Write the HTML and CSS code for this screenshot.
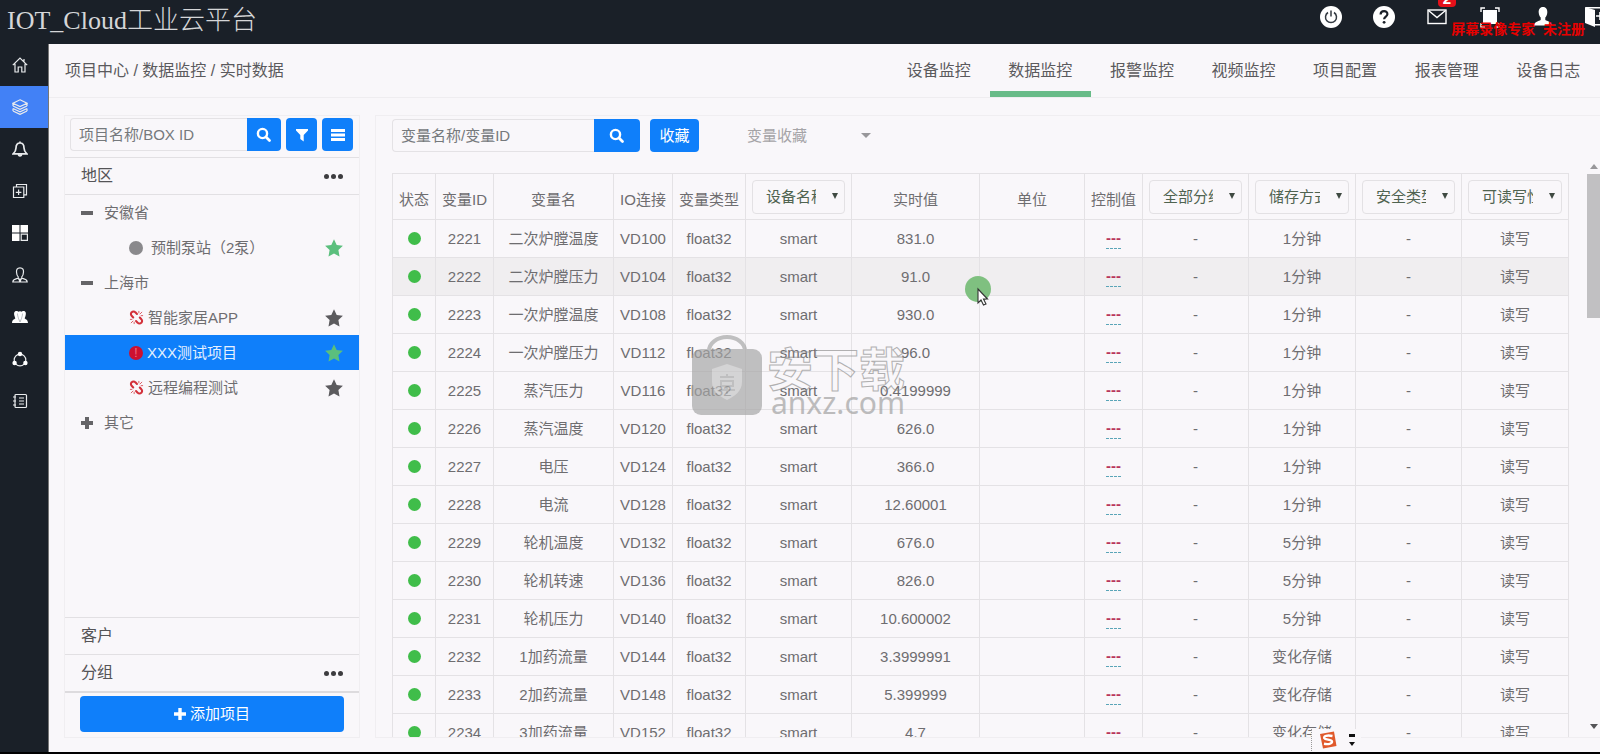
FILE: index.html
```html
<!DOCTYPE html>
<html lang="zh-CN">
<head>
<meta charset="utf-8">
<title>IOT_Cloud工业云平台</title>
<link rel="stylesheet" href="styles.css">
</head>
<body>
<svg class="symbols" aria-hidden="true">
  <symbol id="search" viewBox="0 0 16 16"><circle cx="6.5" cy="6.5" r="4.6" fill="none" stroke="currentColor" stroke-width="2.4"/><path d="M10 10l3.500 3.500" stroke="currentColor" stroke-width="2.800" stroke-linecap="round"/></symbol>
  <symbol id="star" viewBox="0 0 18 18"><path fill="currentColor" d="M9 .3l2.700 5.700 6.200.8-4.500 4.300 1.100 6.400L9 14.500l-5.500 3 1.100-6.400L.1 6.800 6.300 6z"/></symbol>
  <symbol id="broken" viewBox="0 0 16 16"><g fill="none" stroke="currentColor" stroke-width="2.200" stroke-linecap="round"><path d="M8.500 4.200L6.800 2.500a2.600 2.600 0 0 0-4 0 2.600 2.600 0 0 0 0 3.700L4.500 8"/><path d="M7.500 11.800l1.700 1.700a2.600 2.600 0 0 0 4 0 2.600 2.600 0 0 0 0-3.700L11.500 8"/></g><path fill="none" stroke="currentColor" stroke-width=".8" d="M11.500 4.500l2.500-2.500M12.500 6H15M10.500 3.500V1M4.500 11.500L2 14M3.500 10H1M5.500 12.500V15"/></symbol>
</svg>

<header class="topbar">
  <h1 class="brand">IOT_Cloud工业云平台</h1>
  <nav class="top-icons" aria-label="系统">
    <button class="top-btn" aria-label="退出"><svg viewBox="0 0 22 22"><circle cx="11" cy="11" r="11" fill="#fff"/><path d="M8 6.500a5.500 5.500 0 1 0 6 0M11 4.500v6" fill="none" stroke="#333a42" stroke-width="1.500"/></svg></button>
    <button class="top-btn" aria-label="帮助"><svg viewBox="0 0 22 22"><circle cx="11" cy="11" r="11" fill="#fff"/><path d="M7.600 8.500c0-4.500 7-4.300 6.800-.3-.1 2.300-3.300 2.400-3.300 5" fill="none" stroke="#1a2028" stroke-width="2.200"/><circle cx="11.100" cy="16.300" r="1.400" fill="#1a2028"/></svg></button>
    <button class="top-btn" aria-label="消息"><svg viewBox="0 0 22 22" fill="none" stroke="#fff" stroke-width="1.400"><rect x="2" y="4" width="18" height="13.500"/><path d="M2.500 4.500l8.500 7 8.500-7"/></svg><span class="badge">2</span></button>
    <button class="top-btn" aria-label="全屏"><svg viewBox="0 0 22 22"><rect x="4" y="4" width="14" height="14" fill="#fff"/><path d="M2 6V2h4M16 2h4v4M20 17v4h-4M6 21H2v-4" fill="none" stroke="#fff" stroke-width="1.400"/></svg></button>
    <button class="top-btn" aria-label="用户"><svg viewBox="0 0 22 22" fill="#fff"><path d="M11 1c3.200 0 4.500 2.500 4.300 5.500-.2 2.500-1 4-2 5v2.500c2 1.200 6 1.500 6.700 5.500H2c.7-4 4.700-4.300 6.700-5.500v-2.500c-1-1-1.800-2.500-2-5C6.500 3.500 7.800 1 11 1z"/></svg></button>
    <button class="top-btn" aria-label="离开"><svg viewBox="0 0 22 22" fill="#fff"><path d="M0 1l10 3v17L0 17z"/><path d="M1 1.700h20v17H10M11 10h8M15 6v8" fill="none" stroke="#fff" stroke-width="1.600"/></svg></button>
  </nav>
  <p class="recorder">屏幕录像专家&nbsp; 未注册</p>
</header>

<div class="shell">
  <nav class="rail" aria-label="主菜单">
    <a class="rail-item" href="#" aria-label="首页"><svg viewBox="0 0 16 16"><path d="M.8 8.200L8 1l7.200 7.200M3 6.800V15h3.200v-5h3.600v5H13V6.800M12 4.500V2"/></svg></a>
    <a class="rail-item active" href="#" aria-label="项目"><svg viewBox="0 0 16 16"><path d="M8 .8l7 3.400-7 3.400-7-3.400zM1 7l7 3.400L15 7M1 9.500l7 3.400 7-3.400M1 12l7 3.400 7-3.400M1 4.200V7M15 4.200V7M1 9.500V12M15 9.500V12"/></svg></a>
    <a class="rail-item" href="#" aria-label="报警"><svg viewBox="0 0 16 16"><path stroke-width="1.700" d="M8 2C5 2 4 4.500 4 7c0 3-1.200 4.200-2.800 5.800h13.600C13.200 11.200 12 10 12 7c0-2.500-1-5-4-5zM8 2V.5M6.500 13c0 2.500 3 2.500 3 0"/></svg></a>
    <a class="rail-item" href="#" aria-label="新增"><svg viewBox="0 0 16 16"><path d="M1.500 4h10.300v10.500H1.500zM4.500 3.800V1.500h10v10.300h-2.300M6.600 6.500v5.600M3.800 9.300h5.600"/></svg></a>
    <a class="rail-item" href="#" aria-label="面板"><svg viewBox="0 0 16 16"><path fill="#fff" stroke="none" d="M0 0h7.500v7.500H0zM8.500 0H16v7.500H8.500zM0 8.500h7.500V16H0z"/><path d="M9.200 9.200h6.200v6.200H9.200z"/></svg></a>
    <a class="rail-item" href="#" aria-label="用户"><svg viewBox="0 0 16 16"><path d="M8 .8c-3 0-3.600 2-3.500 4.200.1 2.500.9 4 1.700 4.800v1.400C4.500 12 1 11.800.8 15h14.400c-.2-3.200-3.700-3-5.400-3.800V9.800c.8-.8 1.600-2.300 1.700-4.800C11.600 2.800 11 .8 8 .8zM6.200 11L8 14.500 9.800 11M7.500 11.500v3M8.500 11.500v3"/></svg></a>
    <a class="rail-item" href="#" aria-label="用户组"><svg viewBox="0 0 16 16"><path fill="#fff" stroke="none" d="M4.500 2C2 2 1.700 4.500 2.500 7c.3 1.200.8 1.700.8 2.500C2 10.500.3 10.500 0 14h16c-.3-3.500-2-3.500-3.300-4.500 0-.8.5-1.300.8-2.500.8-2.500.5-5-2-5-1 0-1.500.4-1.800.8C9.200 2 6.800 2 6.300 2.800 6 2.400 5.500 2 4.500 2z"/><path stroke="#8b929a" stroke-width=".6" d="M5.500 4.500c0 2.500.8 3.600 1 5L8 13l1.500-3.500c.2-1.400 1-2.500 1-5"/></svg></a>
    <a class="rail-item" href="#" aria-label="连接"><svg viewBox="0 0 16 16"><circle cx="8" cy="9" r="5.800"/><g fill="#fff" stroke="none"><circle cx="8" cy="3" r="2.200"/><circle cx="2.600" cy="12" r="2.200"/><circle cx="13.400" cy="12" r="2.200"/></g></svg></a>
    <a class="rail-item" href="#" aria-label="日志"><svg viewBox="0 0 16 16"><rect x="3" y="1.500" width="11.500" height="13" rx="1"/><path d="M1 4h3M1 8h3M1 12h3M7 5h5M7 8h5M7 11h5"/></svg></a>
  </nav>

  <main class="page">
    <div class="crumb-bar">
      <p class="crumbs">项目中心 / 数据监控 / 实时数据</p>
      <nav class="tabs" aria-label="监控">
        <a class="tab" href="#">设备监控</a>
        <a class="tab current" href="#">数据监控</a>
        <a class="tab" href="#">报警监控</a>
        <a class="tab" href="#">视频监控</a>
        <a class="tab" href="#">项目配置</a>
        <a class="tab" href="#">报表管理</a>
        <a class="tab" href="#">设备日志</a>
      </nav>
    </div>

    <div class="content">
      <aside class="projects">
        <div class="project-search">
          <div class="search-group">
            <input class="search-input" type="text" placeholder="项目名称/BOX ID" aria-label="项目名称">
            <button class="primary joined narrow" aria-label="搜索项目"><svg class="i16"><use href="#search"/></svg></button>
          </div>
          <button class="primary icon-only" aria-label="筛选"><svg class="i16" viewBox="0 0 16 16"><path fill="currentColor" d="M2 2h12v1.500L9.700 8v6.500L6.300 12V8L2 3.500z"/></svg></button>
          <button class="primary icon-only" aria-label="列表"><svg class="i16" viewBox="0 0 16 16"><path stroke="currentColor" stroke-width="2.800" d="M1 3.500h14M1 8h14M1 12.500h14"/></svg></button>
        </div>
        <div class="accordion">
          <div class="section-head"><span>地区</span><button class="more" aria-label="地区操作"><i></i><i></i><i></i></button></div>
          <ul class="tree">
            <li class="node group"><span class="toggle minus"></span>安徽省</li>
            <li class="node leaf"><span class="offline"></span><span class="name wide">预制泵站（2泵）</span><svg class="star on"><use href="#star"/></svg></li>
            <li class="node group"><span class="toggle minus"></span>上海市</li>
            <li class="node leaf"><svg class="broken"><use href="#broken"/></svg><span class="name">智能家居APP</span><svg class="star"><use href="#star"/></svg></li>
            <li class="node leaf selected"><span class="alarm">!</span><span class="name">XXX测试项目</span><svg class="star on"><use href="#star"/></svg></li>
            <li class="node leaf"><svg class="broken"><use href="#broken"/></svg><span class="name">远程编程测试</span><svg class="star"><use href="#star"/></svg></li>
            <li class="node group"><span class="toggle plus"></span>其它</li>
          </ul>
          <div class="section-head"><span>客户</span></div>
          <div class="section-head"><span>分组</span><button class="more" aria-label="分组操作"><i></i><i></i><i></i></button></div>
        </div>
        <button class="primary add"><svg class="plus-icon" viewBox="0 0 12 12"><path stroke="currentColor" stroke-width="3.400" d="M6 0v12M0 6h12"/></svg>添加项目</button>
      </aside>

      <section class="monitor">
        <div class="toolbar">
          <div class="search-group variable">
            <input class="search-input" type="text" placeholder="变量名称/变量ID" aria-label="变量名称">
            <button class="primary joined" aria-label="搜索变量"><svg class="i16"><use href="#search"/></svg></button>
          </div>
          <button class="primary favourite">收藏</button>
          <label class="picker caret"><select class="plain-select" aria-label="变量收藏"><option>变量收藏</option></select></label>
        </div>
        <div class="table-area">
          <div class="table-view">
            <table class="data">
              <colgroup><col class="c43"><col class="c58"><col class="c120"><col class="c59"><col class="c73"><col class="c106"><col class="c128"><col class="c105"><col class="c58"><col class="c106"><col class="c107"><col class="c106"><col class="c107"></colgroup>
              <thead>
                <tr>
                  <th>状态</th><th>变量ID</th><th>变量名</th><th>IO连接</th><th>变量类型</th>
                  <th class="filter"><label class="picker"><select class="box-select" aria-label="设备名称"><option>设备名称</option></select></label></th>
                  <th>实时值</th><th>单位</th><th>控制值</th>
                  <th class="filter"><label class="picker"><select class="box-select" aria-label="全部分组"><option>全部分组</option></select></label></th>
                  <th class="filter"><label class="picker"><select class="box-select" aria-label="储存方式"><option>储存方式</option></select></label></th>
                  <th class="filter"><label class="picker"><select class="box-select" aria-label="安全类型"><option>安全类型</option></select></label></th>
                  <th class="filter"><label class="picker"><select class="box-select" aria-label="可读写性"><option>可读写性</option></select></label></th>
                </tr>
              </thead>
              <tbody>
                <tr><td><span class="dot"></span></td><td>2221</td><td>二次炉膛温度</td><td>VD100</td><td>float32</td><td>smart</td><td>831.0</td><td></td><td><a class="control" href="#">---</a></td><td>-</td><td>1分钟</td><td>-</td><td>读写</td></tr>
                <tr class="hovered"><td><span class="dot"></span></td><td>2222</td><td>二次炉膛压力</td><td>VD104</td><td>float32</td><td>smart</td><td>91.0</td><td></td><td><a class="control" href="#">---</a></td><td>-</td><td>1分钟</td><td>-</td><td>读写</td></tr>
                <tr><td><span class="dot"></span></td><td>2223</td><td>一次炉膛温度</td><td>VD108</td><td>float32</td><td>smart</td><td>930.0</td><td></td><td><a class="control" href="#">---</a></td><td>-</td><td>1分钟</td><td>-</td><td>读写</td></tr>
                <tr><td><span class="dot"></span></td><td>2224</td><td>一次炉膛压力</td><td>VD112</td><td>float32</td><td>smart</td><td>96.0</td><td></td><td><a class="control" href="#">---</a></td><td>-</td><td>1分钟</td><td>-</td><td>读写</td></tr>
                <tr><td><span class="dot"></span></td><td>2225</td><td>蒸汽压力</td><td>VD116</td><td>float32</td><td>smart</td><td>0.4199999</td><td></td><td><a class="control" href="#">---</a></td><td>-</td><td>1分钟</td><td>-</td><td>读写</td></tr>
                <tr><td><span class="dot"></span></td><td>2226</td><td>蒸汽温度</td><td>VD120</td><td>float32</td><td>smart</td><td>626.0</td><td></td><td><a class="control" href="#">---</a></td><td>-</td><td>1分钟</td><td>-</td><td>读写</td></tr>
                <tr><td><span class="dot"></span></td><td>2227</td><td>电压</td><td>VD124</td><td>float32</td><td>smart</td><td>366.0</td><td></td><td><a class="control" href="#">---</a></td><td>-</td><td>1分钟</td><td>-</td><td>读写</td></tr>
                <tr><td><span class="dot"></span></td><td>2228</td><td>电流</td><td>VD128</td><td>float32</td><td>smart</td><td>12.60001</td><td></td><td><a class="control" href="#">---</a></td><td>-</td><td>1分钟</td><td>-</td><td>读写</td></tr>
                <tr><td><span class="dot"></span></td><td>2229</td><td>轮机温度</td><td>VD132</td><td>float32</td><td>smart</td><td>676.0</td><td></td><td><a class="control" href="#">---</a></td><td>-</td><td>5分钟</td><td>-</td><td>读写</td></tr>
                <tr><td><span class="dot"></span></td><td>2230</td><td>轮机转速</td><td>VD136</td><td>float32</td><td>smart</td><td>826.0</td><td></td><td><a class="control" href="#">---</a></td><td>-</td><td>5分钟</td><td>-</td><td>读写</td></tr>
                <tr><td><span class="dot"></span></td><td>2231</td><td>轮机压力</td><td>VD140</td><td>float32</td><td>smart</td><td>10.600002</td><td></td><td><a class="control" href="#">---</a></td><td>-</td><td>5分钟</td><td>-</td><td>读写</td></tr>
                <tr><td><span class="dot"></span></td><td>2232</td><td>1加药流量</td><td>VD144</td><td>float32</td><td>smart</td><td>3.3999991</td><td></td><td><a class="control" href="#">---</a></td><td>-</td><td>变化存储</td><td>-</td><td>读写</td></tr>
                <tr><td><span class="dot"></span></td><td>2233</td><td>2加药流量</td><td>VD148</td><td>float32</td><td>smart</td><td>5.399999</td><td></td><td><a class="control" href="#">---</a></td><td>-</td><td>变化存储</td><td>-</td><td>读写</td></tr>
                <tr><td><span class="dot"></span></td><td>2234</td><td>3加药流量</td><td>VD152</td><td>float32</td><td>smart</td><td>4.7</td><td></td><td><a class="control" href="#">---</a></td><td>-</td><td>变化存储</td><td>-</td><td>读写</td></tr>
              </tbody>
            </table>
          </div>
          <div class="scrollbar" aria-hidden="true"><span class="arrow up"></span><span class="thumb"></span><span class="arrow down"></span></div>
        </div>
      </section>
    </div>
  </main>
</div>

<div class="watermark" aria-hidden="true">
  <svg class="bag" viewBox="0 0 70 80"><path d="M17 16a18 14 0 0 1 36 0" fill="none" stroke="#a5a5a5" stroke-width="4"/><rect y="14" width="70" height="66" rx="9" fill="#a5a5a5"/><path d="M35 29l15 5v13c0 9-7 14-15 18-8-4-15-9-15-18V34z" fill="#c4c4c4"/><path d="M28 42h14M35 39v3M29 46h12v5H29zM27 55h16M35 51v8" fill="none" stroke="#a5a5a5" stroke-width="2"/></svg>
  <div class="mark-text"><span class="mark-cn">安下载</span><span class="mark-url">anxz.com</span></div>
</div>
<svg class="pointer" viewBox="0 0 30 32" aria-hidden="true"><circle cx="13" cy="13" r="13" fill="#7fc080"/><path d="M13 13v14l3-3 2.500 5 2.500-1-2.500-5h4z" fill="#fff" stroke="#333" stroke-width="1.100"/></svg>
<div class="ime" aria-hidden="true">
  <svg class="ime-logo" viewBox="0 0 18 18"><path d="M1 3l14-2.500L17.500 15 4 17.500z" fill="#e0592b"/><path d="M13.500 5C8 3.800 4.500 5 5.300 7.300c1 2 7.200.7 7.700 3.200.3 2.500-4 3-8 2.300" fill="none" stroke="#fff" stroke-width="2.400"/></svg>
  <svg class="ime-menu" viewBox="0 0 6 12"><path d="M0 0h6v3H0zM0 8h6l-3 4z" fill="#111"/></svg>
</div>
</body>
</html>
```

FILE: styles.css
```css
* { box-sizing: border-box; }

body {
  margin: 0;
  height: 100vh;
  display: flex;
  flex-direction: column;
  overflow: hidden;
  position: relative;
  background: #1a2028;
  border-bottom: 2px solid #000;
  color: #6e6d70;
  font: 15px/20px "Liberation Sans", "Noto Sans CJK SC", sans-serif;
}

button, input, select { font: inherit; color: inherit; margin: 0; }
button { border: 0; padding: 0; background: none; cursor: pointer; }
a { color: inherit; text-decoration: none; }
.symbols { position: absolute; width: 0; height: 0; }

/* Top bar */
.topbar {
  position: relative;
  flex: none;
  height: 44px;
  display: flex;
  justify-content: space-between;
  overflow: hidden;
}
.brand {
  margin: 0;
  padding-left: 7px;
  font: 300 26px/42px "Liberation Serif", "Noto Sans CJK SC", serif;
  color: #d5d6d8;
}
.top-icons { display: flex; gap: 31px; margin-right: -7px; padding-top: 6px; }
.top-btn { position: relative; width: 22px; height: 22px; }
.top-btn svg { display: block; width: 22px; height: 22px; }
.badge {
  position: absolute;
  top: -15px;
  right: -8px;
  width: 18px;
  height: 16px;
  border-radius: 4px;
  background: #e5101a;
  color: #fff;
  font-weight: bold;
  line-height: 16px;
}
.recorder {
  position: absolute;
  top: 19px;
  right: 15px;
  margin: 0;
  font-size: 14px;
  font-weight: bold;
  color: #e60000;
}

/* Icon rail */
.shell { flex: 1; min-height: 0; display: flex; }
.rail { flex: none; width: 49px; border-right: 1px solid #777; }
.rail-item { display: flex; align-items: center; height: 42px; padding-left: 12px; }
.rail-item.active { background: #4281f6; }
.rail-item svg { width: 16px; height: 16px; fill: none; stroke: #e9ebed; stroke-width: 1.2; }

/* Page */
.page {
  flex: 1;
  min-width: 0;
  display: flex;
  flex-direction: column;
  background: #f9f7fa;
}
.crumb-bar {
  flex: none;
  display: flex;
  justify-content: space-between;
  height: 54px;
  padding-left: 16px;
  border-bottom: 1px solid #efedf0;
  font-size: 16px;
  line-height: 54px;
  color: #5b5a5d;
}
.crumbs { margin: 0; }
.tabs { display: grid; grid-template-columns: repeat(7, 1fr); width: 711px; margin-right: 1px; }
.tab { text-align: center; height: 53px; }
.tab.current { border-bottom: 6px solid #68bb88; }

.content { flex: 1; min-height: 0; display: flex; gap: 15px; padding: 17px 0 14px 15px; }

/* Project list */
.projects {
  flex: none;
  width: 296px;
  display: flex;
  flex-direction: column;
  border: 1px solid #f0eef1;
}
.project-search { display: flex; gap: 5px; padding: 2px 6px 6px 5px; }
.search-group { display: flex; flex: 1; min-width: 0; }
.search-input {
  flex: 1;
  min-width: 0;
  height: 33px;
  padding: 0 8px;
  border: 1px solid #e4e2e5;
  border-right: 0;
  border-radius: 4px 0 0 4px;
  background: transparent;
}
.search-input::placeholder { color: #75797c; opacity: 1; }
.primary {
  display: flex;
  align-items: center;
  justify-content: center;
  height: 33px;
  border-radius: 4px;
  background: #0f7ffa;
  color: #fff;
}
.joined { flex: none; width: 46px; border-radius: 0 4px 4px 0; }
.joined.narrow { width: 34px; }
.icon-only { flex: none; width: 31px; }
.i16 { width: 16px; height: 16px; }

.accordion {
  flex: 1;
  min-height: 0;
  display: flex;
  flex-direction: column;
  border-bottom: 2px solid #dddbde;
}
.section-head {
  flex: none;
  display: flex;
  justify-content: space-between;
  align-items: center;
  height: 37px;
  padding: 0 16px;
  border-top: 1px solid #e2e0e3;
  font-size: 16px;
  color: #555457;
}
.more { display: flex; gap: 2px; padding: 4px 0; }
.more i { width: 5px; height: 5px; border-radius: 50%; background: #3d3c3f; }
.tree {
  flex: 1;
  margin: 0;
  padding: 0;
  list-style: none;
  border-top: 1px solid #e2e0e3;
}
.node { display: flex; align-items: center; height: 35px; padding: 0 16px; }
.leaf { padding-left: 64px; }
.toggle { position: relative; width: 12px; height: 12px; margin-right: 11px; }
.toggle::before, .plus::after {
  content: "";
  position: absolute;
  inset: 4px 0;
  background: #656467;
}
.plus::after { inset: 0 4px; }
.name { flex: 1; padding-left: 4px; }
.name.wide { padding-left: 8px; }
.offline { width: 14px; height: 14px; border-radius: 50%; background: #8a898c; }
.broken { width: 15px; height: 15px; color: #d3303a; }
.alarm {
  width: 14px;
  height: 14px;
  border-radius: 50%;
  background: #cc1030;
  color: #f07080;
  font-size: 12px;
  line-height: 14px;
  text-align: center;
}
.selected { background: #0f7ffa; color: #e4f0ff; }
.star { width: 18px; height: 18px; color: #5c5b5e; }
.star.on { color: #5bbf7d; }
.add { flex: none; height: 36px; margin: 3px 15px 5px; gap: 4px; border-radius: 4px; }
.plus-icon { width: 12px; height: 12px; }

/* Monitoring table */
.monitor {
  flex: 1;
  min-width: 0;
  display: flex;
  flex-direction: column;
  padding: 3px 0 0 16px;
  border: 1px solid #f0eef1;
  border-right: 0;
}
.toolbar { flex: none; display: flex; align-items: center; height: 33px; margin-bottom: 10px; }
.variable { flex: none; width: 248px; }
.favourite { width: 49px; margin-left: 10px; }
.picker { position: relative; display: block; }
.picker::after {
  content: "";
  position: absolute;
  top: 13px;
  right: 7px;
  border: 3px solid transparent;
  border-top: 6px solid #3f4a42;
  border-bottom: 0;
  pointer-events: none;
}
.caret { margin-left: 48px; width: 124px; color: #a5a4a7; }
.caret::after { top: 7px; right: 0; border-width: 5px; border-bottom-width: 0; border-top-color: #98979a; }
.plain-select, .box-select { appearance: none; display: block; width: 100%; background: transparent; }
.plain-select { border: 0; padding: 0; }
.box-select {
  height: 34px;
  padding: 0 28px 0 13px;
  border: 1px solid #e3e1e4;
  border-radius: 4px;
  color: #4f6350;
}

.table-area { flex: 1; min-height: 0; display: flex; gap: 17px; }
.table-view { flex: 1; min-width: 0; overflow: hidden; padding: 11px 1px 0 0; }
.data {
  width: 100%;
  table-layout: fixed;
  border-collapse: collapse;
  text-align: center;
}
.data th, .data td { border: 1px solid #e4e2e5; padding: 0; white-space: nowrap; }
.data th { height: 46px; padding-top: 7px; font-weight: normal; }
.data th.filter { padding: 0 6px; }
.data td { height: 38px; }
.hovered { background: #f0eef0; }
.c43 { width: 43px; }
.c58 { width: 58px; }
.c59 { width: 59px; }
.c73 { width: 73px; }
.c105 { width: 105px; }
.c106 { width: 106px; }
.c107 { width: 107px; }
.c120 { width: 120px; }
.c128 { width: 128px; }
.dot {
  display: block;
  width: 13px;
  height: 13px;
  margin: 0 auto;
  border-radius: 50%;
  background: #40bd4a;
}
.control {
  display: inline-block;
  border-bottom: 1px dashed #5aa5b8;
  font-weight: bold;
  color: #b8355c;
}

.scrollbar {
  flex: none;
  width: 13px;
  display: flex;
  flex-direction: column;
  align-items: center;
  padding: 2px 0 8px;
}
.thumb { width: 13px; height: 144px; margin-bottom: auto; background: #c1c0c2; }
.arrow { border: 4px solid transparent; }
.up { border-top: 0; border-bottom: 5px solid #98979a; margin-bottom: 5px; }
.down { border-bottom: 0; border-top: 5px solid #555457; }

/* Layers over the page */
.watermark {
  position: absolute;
  left: 692px;
  top: 335px;
  display: flex;
  gap: 5px;
  opacity: .68;
  pointer-events: none;
}
.bag { width: 70px; height: 80px; }
.mark-text { display: flex; flex-direction: column; padding-top: 12px; }
.mark-cn {
  font-size: 46px;
  font-weight: bold;
  line-height: 46px;
  color: transparent;
  -webkit-text-stroke: 1px #909090;
}
.mark-url { padding-left: 4px; font: 30px/20px "Noto Sans", sans-serif; color: #a0a0a0; }
.pointer { position: absolute; left: 965px; top: 276px; width: 30px; height: 32px; pointer-events: none; }
.ime {
  position: absolute;
  left: 1311px;
  top: 729px;
  display: flex;
  align-items: center;
  gap: 12px;
  height: 22px;
  padding: 0 6px 0 7px;
  border-left: 1px dotted #999;
  background: #f9f7fa;
}
.ime-logo { width: 18px; height: 18px; }
.ime-menu { width: 6px; height: 12px; }
```
